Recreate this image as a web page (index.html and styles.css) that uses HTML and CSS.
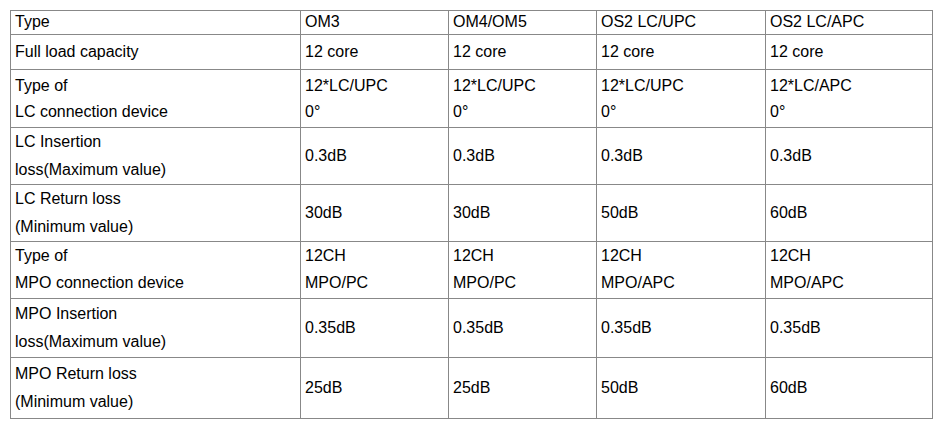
FILE: index.html
```html
<!DOCTYPE html>
<html>
<head>
<meta charset="utf-8">
<link rel="stylesheet" href="styles.css">
</head>
<body>
<div class="spec">
  <div class="c r1">Type</div><div class="c r1">OM3</div><div class="c r1">OM4/OM5</div><div class="c r1">OS2 LC/UPC</div><div class="c r1">OS2 LC/APC</div>

  <div class="c">Full load capacity</div><div class="c">12 core</div><div class="c">12 core</div><div class="c">12 core</div><div class="c">12 core</div>

  <div class="c r3">Type of<br>LC connection device</div><div class="c r3">12*LC/UPC<br>0°</div><div class="c r3">12*LC/UPC<br>0°</div><div class="c r3">12*LC/UPC<br>0°</div><div class="c r3">12*LC/APC<br>0°</div>

  <div class="c">LC Insertion<br>loss(Maximum value)</div><div class="c">0.3dB</div><div class="c">0.3dB</div><div class="c">0.3dB</div><div class="c">0.3dB</div>

  <div class="c">LC Return loss<br>(Minimum value)</div><div class="c">30dB</div><div class="c">30dB</div><div class="c">50dB</div><div class="c">60dB</div>

  <div class="c r6">Type of<br>MPO connection device</div><div class="c r6">12CH<br>MPO/PC</div><div class="c r6">12CH<br>MPO/PC</div><div class="c r6">12CH<br>MPO/APC</div><div class="c r6">12CH<br>MPO/APC</div>

  <div class="c">MPO Insertion<br>loss(Maximum value)</div><div class="c">0.35dB</div><div class="c">0.35dB</div><div class="c">0.35dB</div><div class="c">0.35dB</div>

  <div class="c">MPO Return loss<br>(Minimum value)</div><div class="c">25dB</div><div class="c">25dB</div><div class="c">50dB</div><div class="c">60dB</div>
</div>
</body>
</html>
```

FILE: styles.css
```css
html, body {
  margin: 0;
  padding: 0;
  background: #fff;
}
body {
  padding: 10px;
  font-family: "Liberation Sans", Arial, sans-serif;
  font-size: 16px;
  color: #000;
}
.spec {
  display: grid;
  grid-template-columns: 289px 147px 147px 168px 166px;
  grid-template-rows: 23px 34px 57px 56px 56px 56px 58px 60px;
  gap: 1px;
  padding: 1px;
  background: #888;
  width: max-content;
}
.c {
  background: #fff;
  display: flex;
  flex-direction: column;
  justify-content: center;
  padding: 0 4px;
  line-height: 27.7px;
  white-space: nowrap;
}
.r1 {
  line-height: 18px;
  padding-bottom: 1px;
}
.r3 {
  line-height: 26px;
}
.r6 {
  line-height: 26.7px;
}
```
